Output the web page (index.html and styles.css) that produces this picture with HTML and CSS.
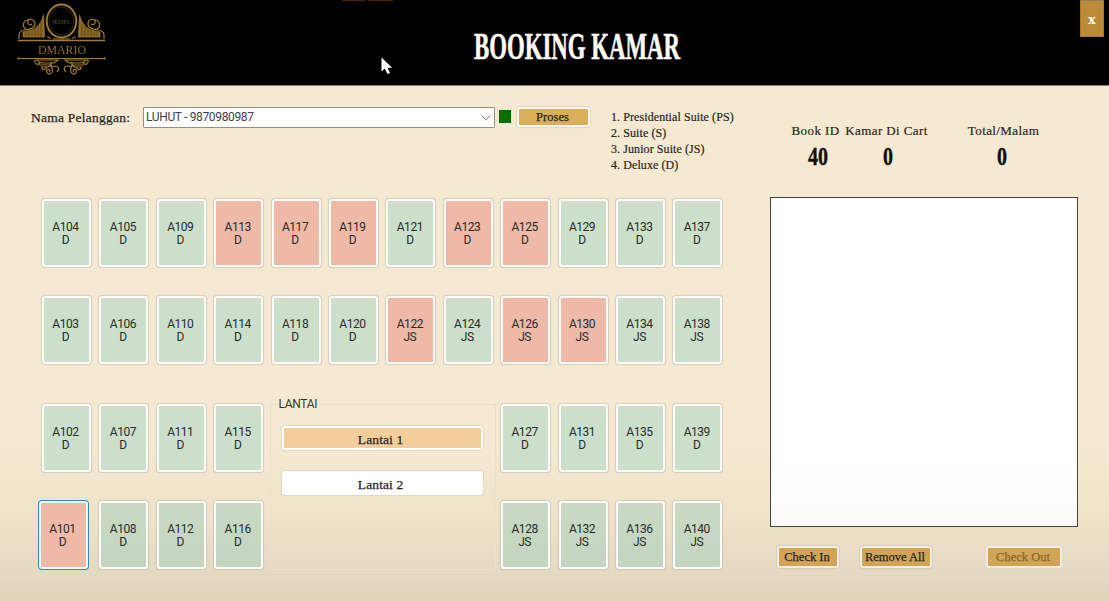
FILE: index.html
```html
<!DOCTYPE html>
<html lang="id">
<head>
<meta charset="utf-8">
<title>Booking Kamar</title>
<link rel="stylesheet" href="styles.css">
</head>
<body>
<div class="window">
  <header class="header">
    <svg class="logo" viewBox="0 0 92 76" fill="none" stroke="#a07c36">
      <ellipse cx="44.500" cy="18" rx="14.800" ry="16.500" stroke-width="1.900"/>
      <ellipse cx="44.500" cy="18" rx="12.300" ry="14" stroke-width=".6" opacity=".5"/>
      <text class="logo-small" x="35" y="21" textLength="19">HOTEL</text>
      <path d="M1 37.500H88" stroke-width="1.400"/>
      <path d="M30 34Q32 34 34 35.500M55 35.500Q57 34 59 34M36 36H53" stroke-width="1"/>
      <g id="scroll">
        <path d="M6 34V29L15 27Q24 23 26.500 12L27.500 34Z" fill="#8c6a25" stroke-width=".8"/>
        <path d="M9 28V34M12 28V34M15 27V34M18 25V34M21 23V34M24 19V34" stroke="#4b3810" stroke-width=".6"/>
        <path d="M2 36V32C2 29 5 27 8 27C13 26 18 25 18 21C18 16 12 15 11 18C10 21 13 23 15 21M9 26C4 23 7 17 11 17" stroke-width="1.200"/>
        <path d="M18 57H41L37 60H27Q22 60 20 57M22 62H35L31 64H24M35 59C31 61 37 65 35 69C33 73 28 70 30 67C32 65 34 68 32 69M35 64C42 61 43 66 40 69M18 57C17 60 20 63 23 60M25 64C25 68 29 67 30 64" stroke-width="1.200"/>
      </g>
      <use href="#scroll" transform="translate(89 0) scale(-1 1)"/>
      <text class="logo-name" x="21" y="51" textLength="48" lengthAdjust="spacingAndGlyphs">DMARIO</text>
      <path d="M1 55.500H88" stroke-width="1"/>
      <circle cx="1.500" cy="55.500" r=".8"/><circle cx="87.500" cy="55.500" r=".8"/>
    </svg>
    <svg class="title" viewBox="0 0 230 60"><text class="title-text" x="12" y="38.500" textLength="206" lengthAdjust="spacingAndGlyphs">BOOKING KAMAR</text></svg>
    <button class="close">x</button>
    <i class="mark mark-a"></i><i class="mark mark-b"></i>
    <svg class="cursor" viewBox="0 0 12 18"><path d="M.5.500V14.500L3.800 11.500L6.400 17L9 15.900L6.600 10.800H11.200Z" fill="#fff"/></svg>
  </header>
  <main class="content">
    <section class="left">
      <div class="form">
        <label class="customer">Nama Pelanggan:</label>
        <div class="select"><span class="select-value">LUHUT - 9870980987</span>
          <svg class="chevron" viewBox="0 0 10 6"><path d="M1 .8L5 4.800L9 .8" fill="none" stroke="#666"/></svg></div>
        <i class="status"></i>
        <button class="btn process"><span>Proses</span></button>
        <ol class="types"><li>1. Presidential Suite (PS)</li><li>2. Suite (S)</li><li>3. Junior Suite (JS)</li><li>4. Deluxe (D)</li></ol>
      </div>
      <div class="rooms" id="rooms">
        <fieldset class="floors"><legend class="legend">LANTAI</legend>
          <button class="floor active">Lantai 1</button>
          <button class="floor">Lantai 2</button>
        </fieldset>
      </div>
    </section>
    <aside class="right">
      <div class="stats">
        <div class="stat book"><span>Book ID</span><svg class="num" viewBox="0 0 40 34"><text class="digits" x="12" y="25.500" textLength="20" lengthAdjust="spacingAndGlyphs">40</text></svg></div>
        <div class="stat cart"><span>Kamar Di Cart</span><svg class="num" viewBox="0 0 40 34"><text class="digits" x="16" y="25.500" textLength="10" lengthAdjust="spacingAndGlyphs">0</text></svg></div>
        <div class="stat total"><span>Total/Malam</span><svg class="num" viewBox="0 0 40 34"><text class="digits" x="13" y="25.500" textLength="10" lengthAdjust="spacingAndGlyphs">0</text></svg></div>
      </div>
      <div class="list"></div>
      <div class="actions">
        <button class="btn check-in"><span>Check In</span></button>
        <button class="btn remove"><span>Remove All</span></button>
        <button class="btn check-out" disabled><span>Check Out</span></button>
      </div>
    </aside>
  </main>
</div>
<script src="rooms.js"></script>
</body>
</html>
```
FILE: rooms.js
```js
const rows = [
  [104, 105, 109, 113, 117, 119, 121, 123, 125, 129, 133, 137],
  [103, 106, 110, 114, 118, 120, 122, 124, 126, 130, 134, 138],
  [102, 107, 111, 115, 0, 0, 0, 0, 127, 131, 135, 139],
  [101, 108, 112, 116, 0, 0, 0, 0, 128, 132, 136, 140]
];
const booked = new Set([101, 113, 117, 119, 122, 123, 125, 126, 130]);
const junior = new Set([122, 124, 126, 128, 130, 132, 134, 136, 138, 140]);
const grid = document.getElementById('rooms');

rows.forEach((row, r) => row.forEach((number, c) => {
  if (!number) return;
  const room = document.createElement('button');
  room.className = `room row-${r + 1} col-${c + 1}`;
  if (booked.has(number)) room.classList.add('booked');
  if (number === 101) room.classList.add('focused');
  room.innerHTML = `<span>A${number}</span><span>${junior.has(number) ? 'JS' : 'D'}</span>`;
  grid.append(room);
}));
```
FILE: styles.css
```css
* { box-sizing: border-box; }
body { margin: 0; font-family: "Liberation Serif", serif; font-size: 13px; color: #29251d; }
button { margin: 0; padding: 0; font: inherit; color: inherit; }
.window { width: 1109px; height: 601px; overflow: hidden; display: flex; flex-direction: column;
  background: linear-gradient(#f5ead1 0, #f5ead1 450px, #eee3c9 520px, #e4d9c1 575px, #dfd4ba 601px); }
.header { position: relative; height: 86px; flex: none; background: #000; display: flex; align-items: flex-start; border-bottom: 1px solid #8a8170; }
.logo { width: 92px; height: 76px; margin: 3px 0 0 17px; flex: none; filter: blur(.3px); }
.logo-name { font-size: 13px; fill: #8f6f30; stroke: none; }
.logo-small { font-size: 6.500px; fill: #5c4820; stroke: none; }
.title { width: 230px; height: 60px; margin: 20px 0 0 353px; flex: none; overflow: visible; }
.title-text { font-size: 37px; font-weight: bold; fill: #fffaf2; stroke: #fffaf2; stroke-width: .6px; }
.close { width: 24px; height: 37px; margin-left: auto; margin-right: 5px; padding-top: 2px; border: 1px solid #a67b31; border-top-color: #8f7a55; background: #bd8b38; color: #fff; font: bold 13px "DejaVu Serif", serif; }
.mark { position: absolute; top: 0; height: 1px; width: 23px; background: #4a2508; }
.mark-a { left: 342px; }
.mark-b { left: 369px; width: 24px; }
.cursor { position: absolute; left: 381px; top: 57px; width: 12px; height: 18px; }
.content { display: flex; flex: 1; }
.left { width: 769.500px; flex: none; }
.form { display: flex; align-items: flex-start; height: 113px; padding-left: 31px; }
.customer { width: 112px; padding-top: 24px; line-height: 16px; font-size: 13.500px; letter-spacing: .25px; white-space: nowrap; -webkit-text-stroke: .25px; }
.select { width: 352px; height: 21px; margin-top: 21px; padding: 0 3px 1px 2px; border: 1px solid #969083; border-radius: 1px; background: #fff; display: flex; align-items: center; justify-content: space-between; }
.select-value { font: 12px Roboto, sans-serif; color: #454147; letter-spacing: -.35px; }
.chevron { width: 10px; height: 6px; margin-top: 2px; }
.status { width: 12px; height: 13px; margin: 24px 0 0 4px; background: #007000; }
.btn { border: 2px solid #fbf7ef; border-radius: 3px; background: #dbae5b; box-shadow: 0 0 1px 1px #b9b0a055; font-size: 12.500px; white-space: nowrap; -webkit-text-stroke: .25px; }
.process { width: 73px; height: 20px; margin: 21px 0 0 6px; padding-right: 2px; letter-spacing: .05px; }
.types { list-style: none; margin: 23px 0 0 21px; padding: 0; font-size: 12px; line-height: 16.100px; letter-spacing: .08px; white-space: nowrap; -webkit-text-stroke: .2px; }
.rooms { display: grid; grid-template-columns: repeat(12, 49px); grid-template-rows: 68px 68px 68px 69px; column-gap: 8.400px; row-gap: 29px; padding-left: 42px; }
.room { width: 49px; height: 68px; border: 2px solid #fcfbf8; border-radius: 3px; background: #cbdfca; background-image: linear-gradient(#d3dccb, #cbdfca 8px); box-shadow: 0 0 1px .5px #b6b6ae88; font: 12px/13px Roboto, sans-serif; letter-spacing: -.45px; color: #292c2a; padding: 2px 2px 0 0; display: flex; flex-direction: column; align-items: center; justify-content: center; }
.booked { background: #efb9a8; }
.focused { margin-left: -3px; border-color: #e7fafa; box-shadow: 0 0 0 1px #3d84b8; }
.row-1 { grid-row: 1; } .row-2 { grid-row: 2; }
.row-3 { grid-row: 3; margin-top: 11px; }
.row-4 { grid-row: 4; margin-top: 11px; }
.row-4:not(.booked) { background: linear-gradient(#cad9c4, #c2d5bf); }
.col-1 { grid-column: 1; } .col-2 { grid-column: 2; } .col-3 { grid-column: 3; } .col-4 { grid-column: 4; }
.col-5 { grid-column: 5; } .col-6 { grid-column: 6; } .col-7 { grid-column: 7; } .col-8 { grid-column: 8; }
.col-9 { grid-column: 9; } .col-10 { grid-column: 10; } .col-11 { grid-column: 11; } .col-12 { grid-column: 12; }
.floors { grid-column: 5 / 9; grid-row: 3 / 5; width: 226px; height: 173px; margin: 4px 0 0 -2px; padding: 15px 10px 0 11px; border: 1px solid #eae1cb; min-width: 0; display: flex; flex-direction: column; gap: 21px; }
.legend { padding: 0; margin-left: -3px; font: 12px/14px Roboto, sans-serif; letter-spacing: -.35px; color: #38342d; }
.floor { width: 201px; height: 24px; flex: none; border: 2px solid #fff; border-radius: 3px; background: #fff; box-shadow: 0 0 1px 1px #bcb9b055; padding: 3px 3px 0 0; font-size: 13.500px; letter-spacing: .1px; -webkit-text-stroke: .25px; }
.active { background: #f3ce9b; }
.right { width: 309px; display: flex; flex-direction: column; }
.stats { height: 111px; display: flex; padding: 37px 0 0 21px; }
.stat { display: flex; flex-direction: column; align-items: center; line-height: 16px; white-space: nowrap; font-size: 13px; letter-spacing: .4px; -webkit-text-stroke: .2px; }
.book { width: 50px; } .cart { width: 84px; margin-left: 4px; } .total { width: 74px; margin-left: 38px; }
.num { width: 40px; height: 34px; flex: none; overflow: visible; }
.digits { font-size: 25px; font-weight: bold; fill: #111; stroke: #111; stroke-width: .4px; letter-spacing: 0; }
.list { width: 308px; height: 330px; border: 1px solid #4a443b; background: linear-gradient(#fff 80%, #fafaf8); }
.actions { display: flex; padding: 19px 0 0 7px; }
.actions .btn { height: 22px; background: #d2a555; border-color: #f1eee8; padding-right: 1px; letter-spacing: 0; }
.check-in { width: 62px; } .remove { width: 72px; margin-left: 21px; } .check-out { width: 76px; margin-left: 54px; }
.check-out span { color: #89672f; }
.actions .check-out { box-shadow: none; }
```
